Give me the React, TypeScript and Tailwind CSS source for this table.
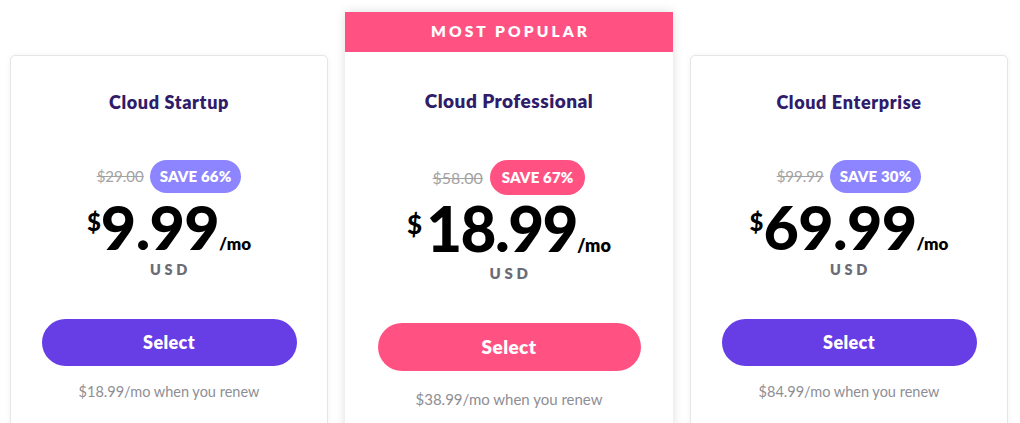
import React from 'react';

interface Plan {
  name: string;
  oldPrice: string;
  save: string;
  price: string;
  renew: string;
  popular?: boolean;
}

const plans: Plan[] = [
  { name: 'Cloud Startup', oldPrice: '$29.00', save: 'SAVE 66%', price: '9.99', renew: '$18.99/mo when you renew' },
  { name: 'Cloud Professional', oldPrice: '$58.00', save: 'SAVE 67%', price: '18.99', renew: '$38.99/mo when you renew', popular: true },
  { name: 'Cloud Enterprise', oldPrice: '$99.99', save: 'SAVE 30%', price: '69.99', renew: '$84.99/mo when you renew' },
];

const PlanCard: React.FC<{ plan: Plan }> = ({ plan }) => {
  if (plan.popular) {
    return (
      <div className="w-[328px] mt-[12px] h-[440px] bg-white flex flex-col items-center shadow-[0_0_10px_rgba(0,0,0,0.13)]">
        <div className="w-full h-[40px] bg-[#ff5283] flex items-center justify-center pl-[3px] text-white text-[15.5px] font-extrabold tracking-[0.2em]">
          MOST POPULAR
        </div>
        <h3 className="mt-[38px] text-[19px] leading-[22px] font-extrabold tracking-[0.025em] text-[#2f1c6a]">{plan.name}</h3>
        <div className="mt-[48px] flex items-center gap-[7px]">
          <span className="text-[16px] text-[#a3a3a3] line-through">{plan.oldPrice}</span>
          <span className="h-[35px] px-[12px] rounded-full bg-[#ff5283] text-white text-[15px] font-extrabold tracking-[0.01em] flex items-center">
            {plan.save}
          </span>
        </div>
        <div className="mt-[2px] flex items-baseline font-black text-black leading-none">
          <span className="self-start text-[26px] mt-[14px] mr-[4px]">$</span>
          <span className="text-[62px] tracking-[-0.025em]">{plan.price}</span>
          <span className="text-[18px] font-extrabold">/mo</span>
        </div>
        <div className="mt-[4px] pl-[3px] text-[15px] leading-[20px] font-extrabold tracking-[0.25em] text-[#6d6c75]">USD</div>
        <button className="mt-[40px] w-[263px] h-[48px] rounded-full bg-[#ff5283] text-white text-[19px] font-extrabold tracking-[0.02em]">
          Select
        </button>
        <p className="mt-[18px] text-[15px] leading-[20px] text-[#8e8e94]">{plan.renew}</p>
      </div>
    );
  }

  return (
    <div className="w-[318px] mt-[55px] h-[400px] bg-white rounded-[5px] border border-[#e6e6e6] flex flex-col items-center shadow-[0_0_6px_rgba(0,0,0,0.05)]">
      <h3 className="mt-[35px] text-[18px] leading-[22px] font-extrabold tracking-[0.035em] text-[#2f1c6a]">{plan.name}</h3>
      <div className="mt-[47px] flex items-center gap-[6px]">
        <span className="text-[15px] text-[#a3a3a3] line-through">{plan.oldPrice}</span>
        <span className="h-[33px] px-[10px] rounded-full bg-[#8c85ff] text-white text-[15px] font-extrabold tracking-[0.01em] flex items-center">
          {plan.save}
        </span>
      </div>
      <div className="mt-[3px] flex items-baseline font-black text-black leading-none">
        <span className="self-start text-[24px] mt-[14px]">$</span>
        <span className="text-[61px] tracking-[-0.01em]">{plan.price}</span>
        <span className="text-[17px] font-extrabold">/mo</span>
      </div>
      <div className="mt-[3px] pl-[3px] text-[14.5px] leading-[20px] font-extrabold tracking-[0.25em] text-[#6d6c75]">USD</div>
      <button className="mt-[39px] w-[255px] h-[47px] rounded-full bg-[#673de6] text-white text-[18px] font-extrabold tracking-[0.02em]">
        Select
      </button>
      <p className="mt-[16px] text-[14.5px] leading-[20px] text-[#8e8e94]">{plan.renew}</p>
    </div>
  );
};

export default function App() {
  return (
    <div className="w-[1020px] h-[423px] overflow-hidden bg-white font-['Lato',sans-serif]">
      <div className="flex items-start gap-[17px] pl-[10px]">
        {plans.map((p) => (
          <PlanCard key={p.name} plan={p} />
        ))}
      </div>
    </div>
  );
}
